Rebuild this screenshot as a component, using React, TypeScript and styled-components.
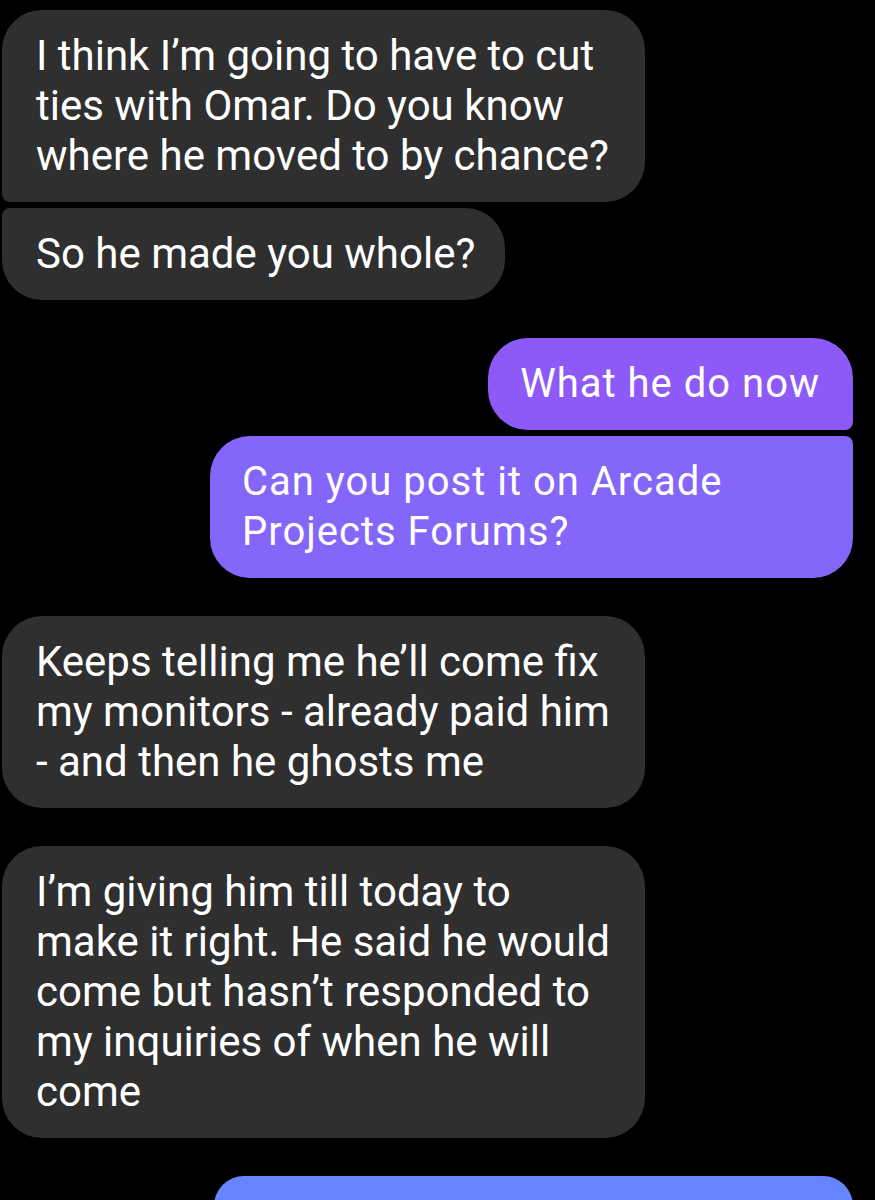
import React from 'react';
import styled, { createGlobalStyle, css } from 'styled-components';

const GlobalStyle = createGlobalStyle`
  html, body {
    margin: 0;
    padding: 0;
    background: #000;
  }
  body {
    font-family: Roboto, 'Noto Sans', 'Liberation Sans', sans-serif;
  }
`;

const COLORS = {
  received: '#2f2f2f',
  sentTop: '#8d5af8',
  sentMid: '#8466fb',
  sentLow: '#6584fe',
  text: '#ffffff',
};

const BIG = 40;
const SMALL = 8;

type Side = 'in' | 'out';
type Pos = 'single' | 'first' | 'last';

const Thread = styled.div`
  width: 875px;
  height: 1200px;
  overflow: hidden;
  box-sizing: border-box;
  padding: 10px 22px 0 2px;
  display: flex;
  flex-direction: column;
  background: #000;
`;

const Group = styled.div<{ side: Side }>`
  display: flex;
  flex-direction: column;
  align-items: ${({ side }) => (side === 'in' ? 'flex-start' : 'flex-end')};
  gap: 6px;
  margin-bottom: 38px;
`;

const radius = (side: Side, pos: Pos) => {
  if (pos === 'single') return `${BIG}px`;
  if (side === 'in') {
    return pos === 'first'
      ? `${BIG}px ${BIG}px ${BIG}px ${SMALL}px`
      : `${SMALL}px ${BIG}px ${BIG}px ${BIG}px`;
  }
  return pos === 'first'
    ? `${BIG}px ${BIG}px ${SMALL}px ${BIG}px`
    : `${BIG}px ${SMALL}px ${BIG}px ${BIG}px`;
};

const Bubble = styled.div<{ side: Side; pos: Pos; tint?: string }>`
  box-sizing: border-box;
  max-width: 643px;
  border-radius: ${({ side, pos }) => radius(side, pos)};
  background: ${({ side, tint }) => (side === 'in' ? COLORS.received : tint)};
  color: ${COLORS.text};
  line-height: 50px;
  ${({ side }) =>
    side === 'in'
      ? css`
          padding: 21px 30px 21px 34px;
          font-size: 42px;
        `
      : css`
          padding: 21px 33px 21px 32px;
          font-size: 40px;
          letter-spacing: 1px;
        `}
`;

const Stub = styled(Bubble)`
  width: 639px;
  height: 60px;
  padding: 0;
`;

export default function App(): JSX.Element {
  return (
    <>
      <GlobalStyle />
      <Thread>
        <Group side="in">
          <Bubble side="in" pos="first">
            I think I’m going to have to cut ties with Omar. Do you know where he moved to by
            chance?
          </Bubble>
          <Bubble side="in" pos="last">
            So he made you whole?
          </Bubble>
        </Group>
        <Group side="out">
          <Bubble side="out" pos="first" tint={COLORS.sentTop}>
            What he do now
          </Bubble>
          <Bubble side="out" pos="last" tint={COLORS.sentMid}>
            Can you post it on Arcade Projects Forums?
          </Bubble>
        </Group>
        <Group side="in">
          <Bubble side="in" pos="single">
            Keeps telling me he’ll come fix my monitors - already paid him - and then he ghosts
            me
          </Bubble>
        </Group>
        <Group side="in">
          <Bubble side="in" pos="single">
            I’m giving him till today to make it right. He said he would come but hasn’t
            responded to my inquiries of when he will come
          </Bubble>
        </Group>
        <Group side="out">
          <Stub side="out" pos="single" tint={COLORS.sentLow} />
        </Group>
      </Thread>
    </>
  );
}
